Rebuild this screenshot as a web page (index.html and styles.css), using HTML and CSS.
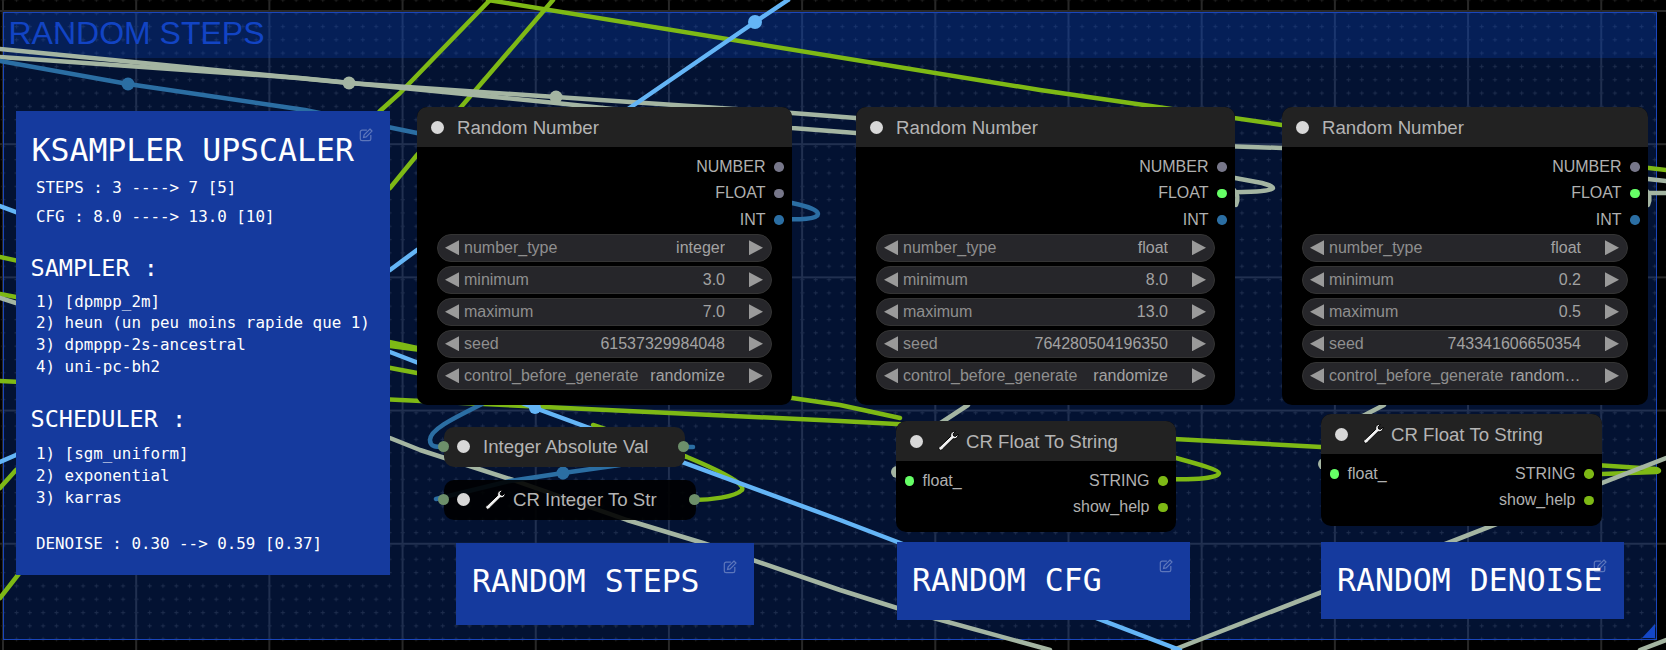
FILE: index.html
```html
<!DOCTYPE html>
<html lang="en">
<head>
<meta charset="utf-8">
<title>Random steps workflow</title>
<link rel="stylesheet" href="styles.css">
</head>
<body>
<main class="canvas">
  <svg class="layer" width="1666" height="650" aria-hidden="true">
    <defs>
      <pattern id="dots" x="0.68" y="10.68" width="13.32" height="13.32" patternUnits="userSpaceOnUse">
        <path class="dot-plus" d="M0 -1.5h1v1.5h1.5v1h-1.5v1.5h-1v-1.5h-1.5v-1h1.5z" transform="translate(2 2)"/>
      </pattern>
    </defs>
    <rect width="1666" height="650" fill="url(#dots)"/>
  </svg>

  <section class="group">
    <h2 class="group-title">RANDOM STEPS</h2>
  </section>

  <svg class="layer" width="1666" height="650" aria-hidden="true">
    <g class="wire green">
      <path d="M488 0L1040 90L1282 125L1666 170"/>
      <path d="M490 0L400 93L380 111L0 598"/>
      <path d="M553 0L461 107L417 155L390 188L16 470L0 488"/>
      <path d="M0 257L417 348"/>
      <path d="M0 294L417 373"/>
      <path d="M0 381L840 421L1321 447L1656 469Q1662 471 1656 472L1602 474"/>
      <path d="M390 346L792 398L840 405L900 418"/>
      <path d="M593 425L687 457C730 475 745 485 742 490C735 497 710 500 694 500"/>
      <path d="M1176 458C1198 464 1219 470 1219 473C1219 478 1198 480 1163 479"/>
    </g>
    <g class="wire gray">
      <path d="M0 49L349 83L556 97L792 113L856 118"/>
      <path d="M0 57L300 78L556 103L792 128L856 133L1282 148"/>
      <path d="M1235 178L1262 183C1272 186 1273 187 1273 188C1272 191 1255 193 1200 192"/>
      <path d="M1648 179L1666 181"/>
      <path d="M1640 193H1666"/>
      <path d="M1234 190C1239 195 1238 200 1236 205"/>
      <path d="M1646 190C1651 195 1650 200 1648 205"/>
      <path d="M0 298L16 303L390 438L420 450L513 480L627 520L703 543L840 590L897 608L1050 650"/>
      <path d="M930 430L968 405"/>
      <path d="M1355 420L1384 405"/>
      <path d="M1173 650L1666 458"/>
      <path d="M1640 650L1666 640"/>
    </g>
    <g class="wire blue">
      <path d="M0 61L128 84L305 110L417 133"/>
      <path d="M792 203C810 207 818 210 818 214C818 219 800 220 779 219"/>
      <path d="M492 398L480 405C450 420 430 430 430 440C430 447 436 447 444 447"/>
      <path d="M436 499L510 481L563 473L620 465"/>
      <path d="M680 447H693"/>
    </g>
    <g class="wire sky">
      <path d="M788 0L755 22L631 107L417 250L390 270L16 455L0 462"/>
      <path d="M0 206L390 352L535 408L840 520L1180 650"/>
    </g>
    <circle class="fill-gray" cx="349" cy="83" r="6.5"/>
    <circle class="fill-gray" cx="556" cy="97" r="6.5"/>
    <circle class="fill-gray" cx="897" cy="472" r="6"/>
    <circle class="fill-gray" cx="1324" cy="464" r="6"/>
    <circle class="fill-blue" cx="128" cy="84" r="6.5"/>
    <circle class="fill-blue" cx="563" cy="473" r="6.5"/>
    <circle class="fill-sky" cx="755" cy="22" r="7"/>
    <circle class="fill-sky" cx="535" cy="408" r="6"/>
    <path class="fill-corner" d="M1655 624V638H1642Z"/>
  </svg>

  <article class="note note-main">
    <svg class="edit" viewBox="0 0 16 16" aria-hidden="true"><path d="M9 2.500H3.500a2 2 0 0 0-2 2v8a2 2 0 0 0 2 2h8a2 2 0 0 0 2-2V8"/><path d="M12.500 1.200l2.300 2.300-6.600 6.600-3 .7.700-3z"/></svg>
    <h1 class="note-title">KSAMPLER UPSCALER</h1>
    <p class="line l-steps">STEPS : 3 ----&gt; 7 [5]</p>
    <p class="line l-cfg">CFG : 8.0 ----&gt; 13.0 [10]</p>
    <h2 class="note-head">SAMPLER :</h2>
    <ol class="list l-sampler">
      <li>1) [dpmpp_2m]</li>
      <li>2) heun (un peu moins rapide que 1)</li>
      <li>3) dpmppp-2s-ancestral</li>
      <li>4) uni-pc-bh2</li>
    </ol>
    <h2 class="note-head">SCHEDULER :</h2>
    <ol class="list l-scheduler">
      <li>1) [sgm_uniform]</li>
      <li>2) exponential</li>
      <li>3) karras</li>
    </ol>
    <p class="line l-denoise">DENOISE : 0.30 --&gt; 0.59 [0.37]</p>
  </article>

  <article class="node rn n-rn1">
    <header class="node-head"><span class="pip"></span><span class="node-name">Random Number</span></header>
    <div class="slots">
      <div class="slot"><span>NUMBER</span><i class="port p-gray"></i></div>
      <div class="slot"><span>FLOAT</span><i class="port p-gray"></i></div>
      <div class="slot"><span>INT</span><i class="port p-blue"></i></div>
    </div>
    <div class="widgets">
      <div class="widget"><b class="arrow left"></b><span class="w-label">number_type</span><span class="w-value">integer</span><b class="arrow right"></b></div>
      <div class="widget"><b class="arrow left"></b><span class="w-label">minimum</span><span class="w-value">3.0</span><b class="arrow right"></b></div>
      <div class="widget"><b class="arrow left"></b><span class="w-label">maximum</span><span class="w-value">7.0</span><b class="arrow right"></b></div>
      <div class="widget"><b class="arrow left"></b><span class="w-label">seed</span><span class="w-value">61537329984048</span><b class="arrow right"></b></div>
      <div class="widget"><b class="arrow left"></b><span class="w-label">control_before_generate</span><span class="w-value">randomize</span><b class="arrow right"></b></div>
    </div>
  </article>

  <article class="node rn n-rn2">
    <header class="node-head"><span class="pip"></span><span class="node-name">Random Number</span></header>
    <div class="slots">
      <div class="slot"><span>NUMBER</span><i class="port p-gray"></i></div>
      <div class="slot"><span>FLOAT</span><i class="port p-lime"></i></div>
      <div class="slot"><span>INT</span><i class="port p-blue"></i></div>
    </div>
    <div class="widgets">
      <div class="widget"><b class="arrow left"></b><span class="w-label">number_type</span><span class="w-value">float</span><b class="arrow right"></b></div>
      <div class="widget"><b class="arrow left"></b><span class="w-label">minimum</span><span class="w-value">8.0</span><b class="arrow right"></b></div>
      <div class="widget"><b class="arrow left"></b><span class="w-label">maximum</span><span class="w-value">13.0</span><b class="arrow right"></b></div>
      <div class="widget"><b class="arrow left"></b><span class="w-label">seed</span><span class="w-value">764280504196350</span><b class="arrow right"></b></div>
      <div class="widget"><b class="arrow left"></b><span class="w-label">control_before_generate</span><span class="w-value">randomize</span><b class="arrow right"></b></div>
    </div>
  </article>

  <article class="node rn n-rn3">
    <header class="node-head"><span class="pip"></span><span class="node-name">Random Number</span></header>
    <div class="slots">
      <div class="slot"><span>NUMBER</span><i class="port p-gray"></i></div>
      <div class="slot"><span>FLOAT</span><i class="port p-lime"></i></div>
      <div class="slot"><span>INT</span><i class="port p-blue"></i></div>
    </div>
    <div class="widgets">
      <div class="widget"><b class="arrow left"></b><span class="w-label">number_type</span><span class="w-value">float</span><b class="arrow right"></b></div>
      <div class="widget"><b class="arrow left"></b><span class="w-label">minimum</span><span class="w-value">0.2</span><b class="arrow right"></b></div>
      <div class="widget"><b class="arrow left"></b><span class="w-label">maximum</span><span class="w-value">0.5</span><b class="arrow right"></b></div>
      <div class="widget"><b class="arrow left"></b><span class="w-label">seed</span><span class="w-value">743341606650354</span><b class="arrow right"></b></div>
      <div class="widget"><b class="arrow left"></b><span class="w-label">control_before_generate</span><span class="w-value">randomize</span><b class="arrow right"></b></div>
    </div>
  </article>

  <article class="node collapsed n-abs">
    <i class="side side-l"></i><span class="pip"></span><span class="node-name">Integer Absolute Val</span><i class="side side-r"></i>
  </article>

  <article class="node collapsed dark n-str">
    <i class="side side-l"></i><span class="pip"></span>
    <svg class="wrench" viewBox="0 0 20 20" aria-hidden="true"><path d="M2.200 19.200c-1-.6-1.600-1.500-1.400-2.600l.8-.8.500-.3L12.800 5.300c-.4-1.400 0-2.900 1-3.800 1-.9 2.300-1.300 3.600-1l-2.300 2.400.5 2 2 .5 2.300-2.300c.3 1.300-.1 2.600-1 3.600-1 1-2.400 1.400-3.800 1L4.400 18.200c-.6.800-1.300 1.200-2.200 1z"/></svg>
    <span class="node-name">CR Integer To Str</span><i class="side side-r"></i>
  </article>

  <article class="node n-cf1">
    <header class="node-head"><span class="pip"></span>
      <svg class="wrench" viewBox="0 0 20 20" aria-hidden="true"><path d="M2.200 19.200c-1-.6-1.600-1.500-1.400-2.600l.8-.8.500-.3L12.800 5.300c-.4-1.400 0-2.900 1-3.800 1-.9 2.300-1.300 3.600-1l-2.300 2.400.5 2 2 .5 2.300-2.300c.3 1.300-.1 2.600-1 3.600-1 1-2.400 1.400-3.800 1L4.400 18.200c-.6.800-1.300 1.200-2.200 1z"/></svg>
      <span class="node-name">CR Float To String</span></header>
    <div class="slots">
      <div class="slot between"><span class="input"><i class="port p-lime"></i><span>float_</span></span><span class="output"><span>STRING</span><i class="port p-green"></i></span></div>
      <div class="slot"><span>show_help</span><i class="port p-green"></i></div>
    </div>
  </article>

  <article class="node n-cf2">
    <header class="node-head"><span class="pip"></span>
      <svg class="wrench" viewBox="0 0 20 20" aria-hidden="true"><path d="M2.200 19.200c-1-.6-1.600-1.500-1.400-2.600l.8-.8.500-.3L12.800 5.300c-.4-1.400 0-2.900 1-3.800 1-.9 2.300-1.300 3.600-1l-2.300 2.400.5 2 2 .5 2.300-2.300c.3 1.300-.1 2.600-1 3.600-1 1-2.400 1.400-3.800 1L4.400 18.200c-.6.800-1.300 1.200-2.200 1z"/></svg>
      <span class="node-name">CR Float To String</span></header>
    <div class="slots">
      <div class="slot between"><span class="input"><i class="port p-lime"></i><span>float_</span></span><span class="output"><span>STRING</span><i class="port p-green"></i></span></div>
      <div class="slot"><span>show_help</span><i class="port p-green"></i></div>
    </div>
  </article>

  <article class="note note-small n-steps">
    <svg class="edit" viewBox="0 0 16 16" aria-hidden="true"><path d="M9 2.500H3.500a2 2 0 0 0-2 2v8a2 2 0 0 0 2 2h8a2 2 0 0 0 2-2V8"/><path d="M12.500 1.200l2.300 2.300-6.600 6.600-3 .7.700-3z"/></svg>
    <h2 class="note-title">RANDOM STEPS</h2>
  </article>
  <article class="note note-small n-cfg">
    <svg class="edit" viewBox="0 0 16 16" aria-hidden="true"><path d="M9 2.500H3.500a2 2 0 0 0-2 2v8a2 2 0 0 0 2 2h8a2 2 0 0 0 2-2V8"/><path d="M12.500 1.200l2.300 2.300-6.600 6.600-3 .7.700-3z"/></svg>
    <h2 class="note-title">RANDOM CFG</h2>
  </article>
  <article class="note note-small n-den">
    <svg class="edit" viewBox="0 0 16 16" aria-hidden="true"><path d="M9 2.500H3.500a2 2 0 0 0-2 2v8a2 2 0 0 0 2 2h8a2 2 0 0 0 2-2V8"/><path d="M12.500 1.200l2.300 2.300-6.600 6.600-3 .7.700-3z"/></svg>
    <h2 class="note-title">RANDOM DENOISE</h2>
  </article>
</main>
</body>
</html>
```
FILE: styles.css
```css
* { box-sizing: border-box; }
html, body { margin: 0; padding: 0; background: #000; }
h1, h2, p, ol { margin: 0; padding: 0; font-weight: normal; }
ol { list-style: none; }

.canvas {
  position: relative;
  width: 1666px;
  height: 650px;
  overflow: hidden;
  font-family: "Liberation Sans", Arial, sans-serif;
  background-color: #000;
  background-image:
    linear-gradient(#282828 2px, transparent 2px),
    linear-gradient(90deg, #282828 2px, transparent 2px);
  background-size: 133.2px 133.2px;
  background-position: 2px 10px;
}

.layer { position: absolute; left: 0; top: 0; }
.dot-plus { fill: #232323; }

.group {
  position: absolute;
  left: 3px;
  top: 12px;
  width: 1654px;
  height: 628px;
  border: 1.5px solid #1a46bb;
  background: rgba(10, 72, 200, 0.25);
}
.group-title {
  height: 45px;
  padding-left: 4.5px;
  font-size: 32px;
  line-height: 40px;
  color: #1244c4;
  background: rgba(10, 72, 200, 0.25);
}

.wire path { fill: none; stroke-width: 4.5px; stroke-linecap: round; stroke-linejoin: round; }
.green path { stroke: #7eb915; }
.gray path { stroke: #a4b5a2; }
.blue path { stroke: #2b6ea3; }
.sky path { stroke: #64b5f6; }
.fill-gray { fill: #a4b5a2; }
.fill-blue { fill: #2b6ea3; }
.fill-sky { fill: #64b5f6; }
.fill-corner { fill: #1447c8; }

/* nodes */
.node {
  position: absolute;
  background: #000;
  border-radius: 10px;
  font-size: 16px;
  color: #b0b0b0;
}
.node-head {
  display: flex;
  align-items: center;
  height: 40px;
  padding-left: 14px;
  background: #222;
  border-radius: 10px 10px 0 0;
}
.pip {
  flex: none;
  width: 13px;
  height: 13px;
  border-radius: 50%;
  background: #d8d8d8;
}
.node-name {
  margin-left: 13px;
  padding-top: 1px;
  font-size: 18.65px;
  color: #b4b4b4;
  white-space: nowrap;
}
.wrench {
  flex: none;
  width: 20px;
  height: 20px;
  margin-left: 15px;
  overflow: visible;
}
.wrench path { fill: #f2f2f2; stroke: #000; stroke-width: 1px; }
.wrench + .node-name { margin-left: 8px; }

.slots { padding-top: 6.5px; }
.slot {
  display: flex;
  align-items: center;
  justify-content: flex-end;
  gap: 8.5px;
  height: 26.65px;
  padding: 0 8.5px;
}
.between { justify-content: space-between; }
.input, .output { display: flex; align-items: center; gap: 8.5px; }
.port {
  flex: none;
  width: 9.5px;
  height: 9.5px;
  border-radius: 50%;
}
.p-gray { background: #77778a; }
.p-blue { background: #2b6ea3; }
.p-lime { background: #66ff66; }
.p-green { background: #7eb915; }

.widgets {
  display: flex;
  flex-direction: column;
  gap: 4.3px;
  margin-top: 0.6px;
  padding: 0 20px;
}
.widget {
  display: flex;
  align-items: center;
  height: 27.7px;
  padding: 0 8px 0 7px;
  border: 1px solid #343434;
  border-radius: 14px;
  background: #26262a;
  color: #8f8f8f;
}
.arrow {
  flex: none;
  width: 14px;
  height: 15px;
  background: #9a9a9a;
}
.left { clip-path: polygon(100% 0, 100% 100%, 0 50%); }
.right { clip-path: polygon(0 0, 0 100%, 100% 50%); margin-left: 24px; }
.w-label { flex: none; margin-left: 5px; white-space: nowrap; }
.w-value {
  flex: 1 1 0;
  min-width: 0;
  margin-left: 7px;
  overflow: hidden;
  color: #a2a2a2;
  text-align: right;
  text-overflow: ellipsis;
  white-space: nowrap;
}

.rn { top: 107px; height: 298px; }
.n-rn1 { left: 417px; width: 375px; }
.n-rn2 { left: 856px; width: 379px; }
.n-rn3 { left: 1282px; width: 366px; }

.n-cf1 { left: 896px; top: 421px; width: 280px; height: 111px; }
.n-cf2 { left: 1321px; top: 414px; width: 281px; height: 112px; }

.collapsed {
  display: flex;
  align-items: center;
  height: 39.5px;
  padding-left: 13px;
  background: #222;
}
.dark { background: rgba(0, 0, 0, 0.9); }
.n-abs { left: 444px; top: 427px; width: 241px; }
.n-str { left: 444px; top: 480px; width: 252px; }
.side {
  position: absolute;
  top: 50%;
  width: 11px;
  height: 11px;
  margin-top: -5.5px;
  border-radius: 50%;
  background: #6d8f6a;
}
.side-l { left: -6px; }
.side-r { right: -3.500px; }

/* notes */
.note {
  position: absolute;
  background: #153a9e;
  color: #fff;
  font-family: "DejaVu Sans Mono", "Liberation Mono", monospace;
}
.edit {
  position: absolute;
  width: 14px;
  height: 14px;
  right: 17px;
  top: 17px;
  fill: none;
  stroke: #fff;
  stroke-width: 1.400px;
  opacity: 0.3;
}
.note-title {
  font-size: 31.5px;
  line-height: 40px;
  white-space: nowrap;
}
.note-main {
  left: 16px;
  top: 111px;
  width: 374px;
  height: 464px;
  padding: 19px 15.5px 0;
}
.note-head {
  margin-top: 26.5px;
  margin-left: -1px;
  font-size: 23.5px;
  line-height: 30px;
}
.line, .list li {
  padding-left: 4.5px;
  font-size: 15.85px;
  line-height: 21px;
  white-space: nowrap;
}
.list li { line-height: 21.67px; }
.l-steps { margin-top: 6.5px; }
.l-cfg { margin-top: 8px; }
.l-sampler { margin-top: 7.5px; }
.l-scheduler { margin-top: 9.5px; }
.l-denoise { margin-top: 25px; }

.note-small { padding: 18px 16px 0; }
.n-steps { left: 456px; top: 543px; width: 298px; height: 82px; }
.n-cfg { left: 897px; top: 542px; width: 293px; height: 78px; padding-left: 15px; }
.n-den { left: 1321px; top: 542px; width: 303px; height: 77px; padding-left: 16px; }
```
